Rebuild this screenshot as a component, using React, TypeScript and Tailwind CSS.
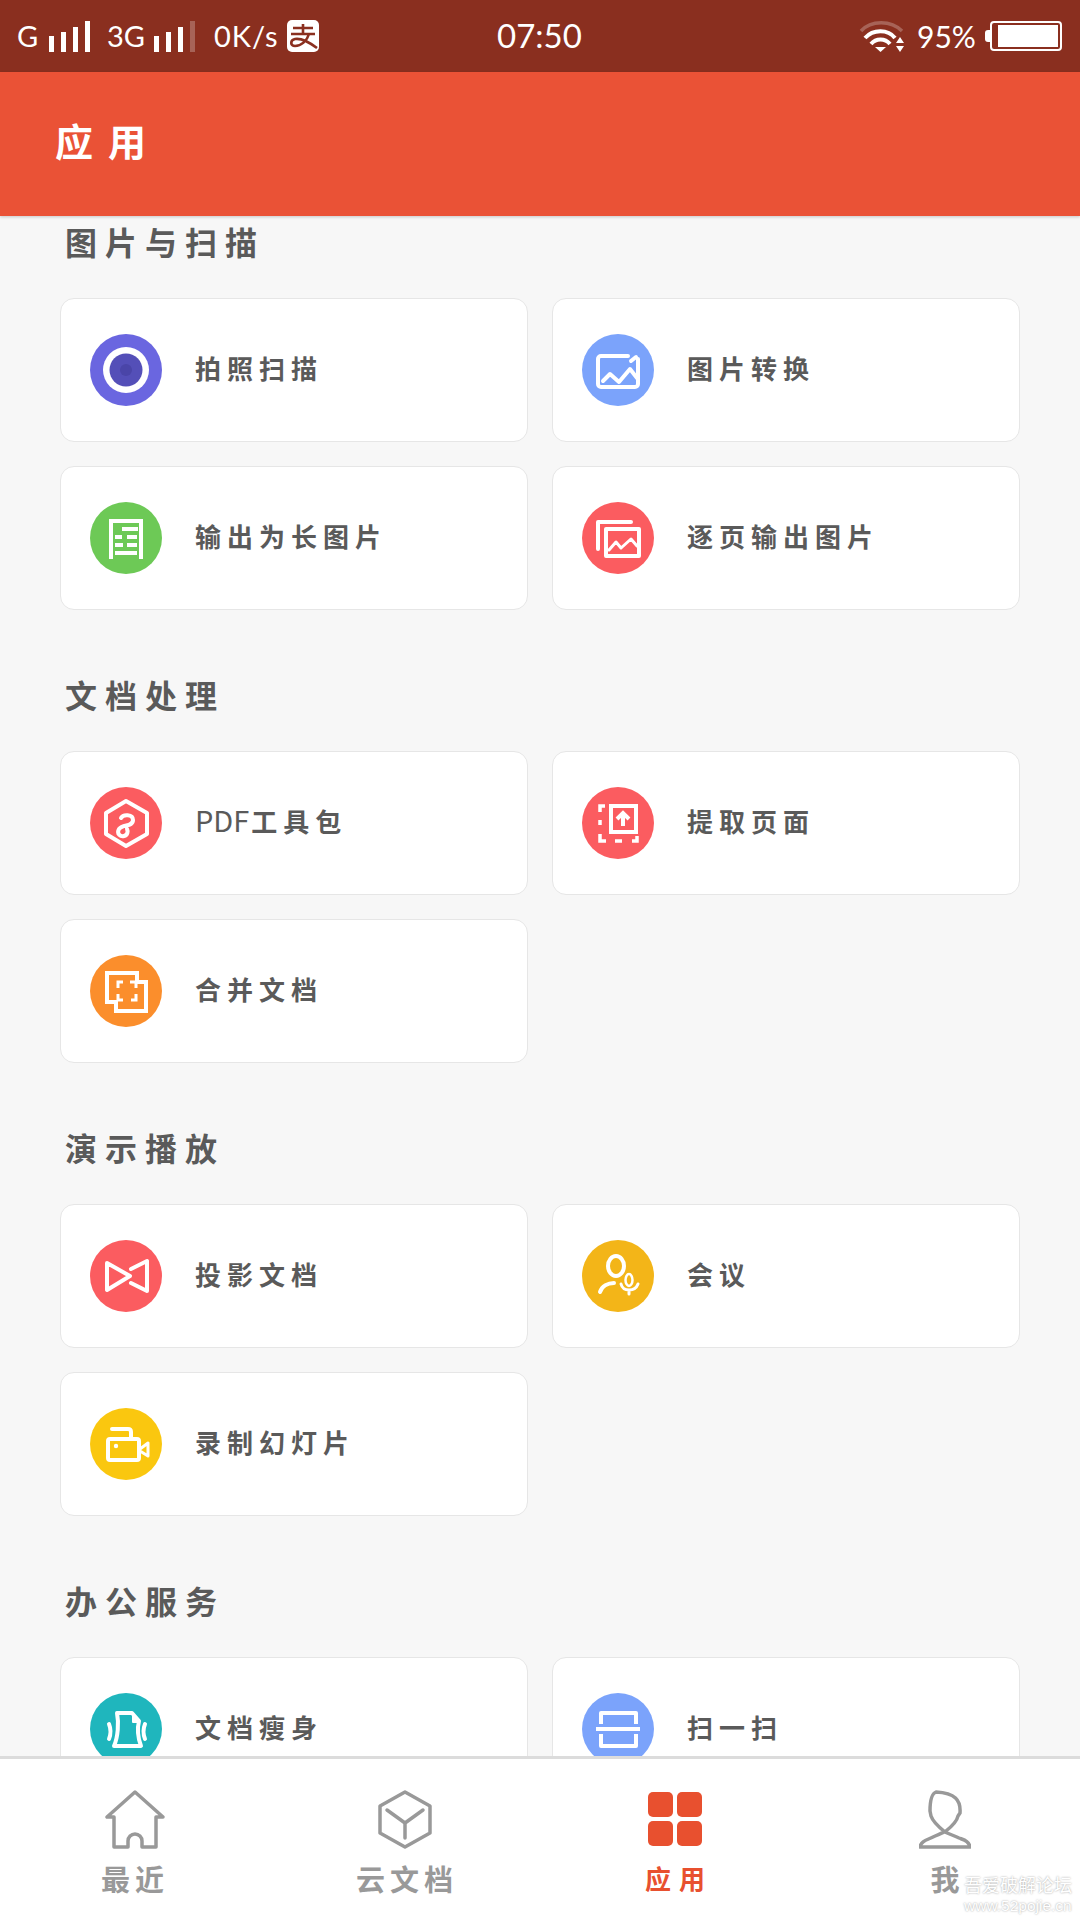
import type { ReactNode } from 'react';

type Item = { label: string; latin?: string; color: string; icon: ReactNode };
type Section = { title: string; items: Item[] };

const stroke = {
  fill: 'none',
  stroke: 'white',
  strokeWidth: 4,
  strokeLinecap: 'round',
  strokeLinejoin: 'round',
} as const;

const sections: Section[] = [
  {
    title: '图片与扫描',
    items: [
      {
        label: '拍照扫描',
        color: 'bg-[#6a66e0]',
        icon: (
          <>
            <circle cx="36" cy="36" r="23" fill="white" />
            <circle cx="36" cy="36" r="16.5" fill="#544fb8" />
            <circle cx="36" cy="36" r="6" fill="#4a45a8" />
          </>
        ),
      },
      {
        label: '图片转换',
        color: 'bg-[#7ba3fb]',
        icon: (
          <g {...stroke}>
            <path d="M46 22H19a3 3 0 0 0-3 3v25a3 3 0 0 0 3 3h34a3 3 0 0 0 3-3V25" />
            <path d="M21 47l7-7 9 8 11-13 7 9" />
            <path d="M49 27l5-4" />
          </g>
        ),
      },
      {
        label: '输出为长图片',
        color: 'bg-[#6dc956]',
        icon: (
          <g {...stroke} strokeLinecap="butt" strokeLinejoin="miter">
            <path d="M21 57V19H51V57" />
            <path d="M32 27H48M25 35H32M37 35H47M25 43H33M37 43H47M25 51H47" />
          </g>
        ),
      },
      {
        label: '逐页输出图片',
        color: 'bg-[#fb5c60]',
        icon: (
          <g {...stroke}>
            <path d="M16 47V20H49" />
            <rect x="24" y="27" width="33" height="27" />
            <path d="M27 48l7-8 5 6 10-9 6 7" strokeWidth="3" />
          </g>
        ),
      },
    ],
  },
  {
    title: '文档处理',
    items: [
      {
        label: '工具包',
        latin: 'PDF',
        color: 'bg-[#fb5c60]',
        icon: (
          <g {...stroke}>
            <path d="M36 14L57 26V47L36 59L16 47V26Z" />
            <path d="M31 31C33 27 43 27 43 33C43 40 33 37 29 42C26 47 31 50 34 49C38 48 38 44 37 42" />
          </g>
        ),
      },
      {
        label: '提取页面',
        color: 'bg-[#fb5c60]',
        icon: (
          <g {...stroke} strokeLinecap="butt" strokeLinejoin="miter">
            <rect x="29" y="19" width="25" height="26" />
            <path d="M41 39V27M35 32l6-6 6 6" />
            <path d="M23 19H18V25M18 33V38M18 47V54H24M33 54H40M50 54H55V49" strokeWidth="3.5" />
          </g>
        ),
      },
      {
        label: '合并文档',
        color: 'bg-[#fb8e2c]',
        icon: (
          <g {...stroke} strokeLinecap="butt" strokeLinejoin="miter">
            <path d="M17 18H47V27H56V56H26V47H17Z" />
            <path d="M28 33V27H33M40 27H46V33M46 39V45H41M33 45H28V39" strokeWidth="3" />
          </g>
        ),
      },
    ],
  },
  {
    title: '演示播放',
    items: [
      {
        label: '投影文档',
        color: 'bg-[#fb5c60]',
        icon: (
          <g {...stroke}>
            <path d="M17 23L40 36L17 50Z" />
            <path d="M41 29L57 21V51L41 43" />
          </g>
        ),
      },
      {
        label: '会议',
        color: 'bg-[#f3b518]',
        icon: (
          <g {...stroke}>
            <ellipse cx="34" cy="26" rx="8" ry="10" />
            <path d="M18 52C20 46 26 43 32 43" />
            <ellipse cx="47" cy="40" rx="3.5" ry="6" strokeWidth="2.5" />
            <path d="M39 44C41 52 53 52 56 44M47 50V54" strokeWidth="3" />
          </g>
        ),
      },
      {
        label: '录制幻灯片',
        color: 'bg-[#fac70f]',
        icon: (
          <g {...stroke}>
            <rect x="18" y="31" width="31" height="21" rx="2" />
            <path d="M22 21H38C40 21 41 22 41 24V30" />
            <circle cx="26" cy="38" r="2.2" fill="white" stroke="none" />
            <path d="M50 41L58 35V48L50 43" strokeWidth="3" />
          </g>
        ),
      },
    ],
  },
  {
    title: '办公服务',
    items: [
      {
        label: '文档瘦身',
        color: 'bg-[#1fb6bd]',
        icon: (
          <g {...stroke}>
            <path d="M29 20H42L49 28C47 36 48 45 51 53H24C28 44 29 30 27 20Z" />
            <path d="M43 22V29H49" fill="white" strokeWidth="2" />
            <path d="M19 31C21 36 21 41 19 46M55 31C53 36 53 41 55 46" />
          </g>
        ),
      },
      {
        label: '扫一扫',
        color: 'bg-[#7ba3fb]',
        icon: (
          <g {...stroke} strokeLinecap="butt">
            <path d="M19 31V20H54V31M19 41V53H54V41" />
            <path d="M14 36H58" />
          </g>
        ),
      },
    ],
  },
];

function Signal({ dim }: { dim?: boolean }) {
  return (
    <svg width="41" height="32" viewBox="0 0 41 32">
      <rect x="0" y="16" width="5" height="16" fill="white" />
      <rect x="12" y="12" width="5" height="20" fill="white" />
      <rect x="24" y="7" width="5" height="25" fill="white" />
      <rect x="36" y="1" width="5" height="31" fill="white" fillOpacity={dim ? 0.25 : 1} />
    </svg>
  );
}

function StatusBar() {
  return (
    <div className="h-[72px] shrink-0 bg-[#8a2f1f] flex items-center text-white font-['Lato',sans-serif] text-[29px]">
      <div className="w-[497px] pl-[17px] flex items-center">
        <span className="w-[32px]">G</span>
        <Signal />
        <span className="ml-[17px] w-[47px]">3G</span>
        <Signal dim />
        <span className="ml-[19px] w-[73px] tracking-[1px]">0K/s</span>
        <svg width="32" height="32" viewBox="0 0 32 32">
          <rect width="32" height="32" rx="5" fill="white" />
          <path
            d="M6 8H26M16 4V14M4 14H28M22 14C20 21 14 26 8 26C3 26 3 20 8 19C14 18 22 22 30 28"
            fill="none"
            stroke="#8a2f1f"
            strokeWidth="2.6"
          />
        </svg>
      </div>
      <span className="w-[88px] text-[33px]">07:50</span>
      <div className="flex-1 flex items-center justify-end pr-[18px]">
        <svg width="46" height="34" viewBox="0 0 46 34" className="mr-[12px]">
          <path d="M2 12C12 1 32 1 43 12" fill="none" stroke="white" strokeOpacity=".25" strokeWidth="3.5" />
          <path d="M6 19C14 10 29 10 36 19" fill="none" stroke="white" strokeWidth="4" />
          <path d="M12 25C17 19 26 19 31 25" fill="none" stroke="white" strokeWidth="4" />
          <path d="M16 28H27L21.5 33Z" fill="white" />
          <path d="M37 24H45L41 18ZM37 27H45L41 33Z" fill="white" />
        </svg>
        <span className="w-[68px] text-[30px]">95%</span>
        <div className="w-[5px] h-[12px] bg-white rounded-l-[3px]" />
        <div className="w-[72px] h-[30px] border-[2px] border-white rounded-[4px] pl-[6px] pr-[2px] py-[2px]">
          <div className="h-full bg-white" />
        </div>
      </div>
    </div>
  );
}

function Card({ item }: { item: Item }) {
  return (
    <div className="h-[144px] bg-white border border-[#e6e6e6] rounded-[14px] pl-[29px] flex items-center">
      <div className={`w-[72px] h-[72px] rounded-full shrink-0 ${item.color}`}>
        <svg width="72" height="72" viewBox="0 0 72 72">
          {item.icon}
        </svg>
      </div>
      <span className="ml-[33px] pb-[6px] text-[26px] tracking-[6px] text-[#5a5a5a] font-bold">
        {item.latin && <span className="tracking-normal font-normal text-[29px] mr-[2px]">{item.latin}</span>}
        {item.label}
      </span>
    </div>
  );
}

const navIcon = {
  fill: 'none',
  stroke: '#999',
  strokeWidth: 3.5,
  strokeLinejoin: 'round',
  strokeLinecap: 'round',
} as const;

function BottomNav() {
  return (
    <div className="relative h-[164px] shrink-0 bg-white border-t-[3px] border-[#dcdcdc] grid grid-cols-4">
      <div className="flex flex-col items-center pt-[31px]">
        <svg width="60" height="59" viewBox="0 0 60 59" {...navIcon}>
          <path d="M30 2L2 27H9V57H23V51a7 7 0 0 1 14 0V57H51V27H58Z" />
        </svg>
        <span className="mt-[14px] leading-[30px] text-[29px] tracking-[5px] text-[#999] font-bold">最近</span>
      </div>
      <div className="flex flex-col items-center pt-[31px]">
        <svg width="54" height="59" viewBox="0 0 54 59" {...navIcon}>
          <path d="M27 2L52 16V43L27 57L2 43V16Z" />
          <path d="M9 20L27 33L45 20M27 33V48" />
        </svg>
        <span className="mt-[14px] pl-[4px] leading-[30px] text-[29px] tracking-[5px] text-[#999] font-bold">云文档</span>
      </div>
      <div className="flex flex-col items-center pt-[33px]">
        <div className="w-[54px] h-[54px] grid grid-cols-2 gap-[4px]">
          <div className="bg-[#e8502f] rounded-[5px]" />
          <div className="bg-[#e8502f] rounded-[5px]" />
          <div className="bg-[#e8502f] rounded-[5px]" />
          <div className="bg-[#e8502f] rounded-[5px]" />
        </div>
        <span className="mt-[17px] pl-[8px] leading-[30px] text-[26px] tracking-[8px] text-[#e8502f] font-bold">应用</span>
      </div>
      <div className="flex flex-col items-center pt-[31px]">
        <svg width="52" height="59" viewBox="0 0 52 59" {...navIcon}>
          <path d="M1 57C2 51 8 50 14 47C18 45 24 43 27 41C32 37 38 31 39 26L41 23C42 10 36 3 17 2C12 4 11 12 11 21L12 26C14 32 21 38 26 42C30 44 36 46 40 48C45 50 50 51 51 57Z" />
        </svg>
        <span className="mt-[14px] leading-[30px] text-[29px] text-[#999] font-bold">我</span>
      </div>
      <div className="absolute right-[8px] bottom-[4px] flex flex-col items-start text-white [text-shadow:0_0_2px_#999]">
        <span className="text-[18px] leading-[24px]">吾爱破解论坛</span>
        <span className="text-[15.5px] leading-[20px] font-['Liberation_Sans',sans-serif]">www.52pojie.cn</span>
      </div>
    </div>
  );
}

export default function App() {
  return (
    <div className="w-[1080px] h-[1920px] flex flex-col overflow-hidden bg-[#f7f7f7] font-['Noto_Sans_CJK_SC',sans-serif]">
      <StatusBar />
      <header className="relative z-10 h-[144px] shrink-0 bg-[#ea5236] shadow-[0_1px_3px_rgba(0,0,0,0.2)] flex items-center pl-[55px]">
        <h1 className="pb-[10px] text-[38px] tracking-[15px] text-white font-bold">应用</h1>
      </header>
      <main className="flex-1 min-h-0 overflow-hidden px-[60px]">
        {sections.map((section) => (
          <section key={section.title} className="mb-[59px]">
            <h2 className="h-[54px] mb-[28px] pl-[5px] pb-[5px] flex items-center text-[32px] tracking-[8px] text-[#5a5a5a] font-bold">
              {section.title}
            </h2>
            <div className="grid grid-cols-2 gap-[24px]">
              {section.items.map((item) => (
                <Card key={item.label} item={item} />
              ))}
            </div>
          </section>
        ))}
      </main>
      <BottomNav />
    </div>
  );
}
